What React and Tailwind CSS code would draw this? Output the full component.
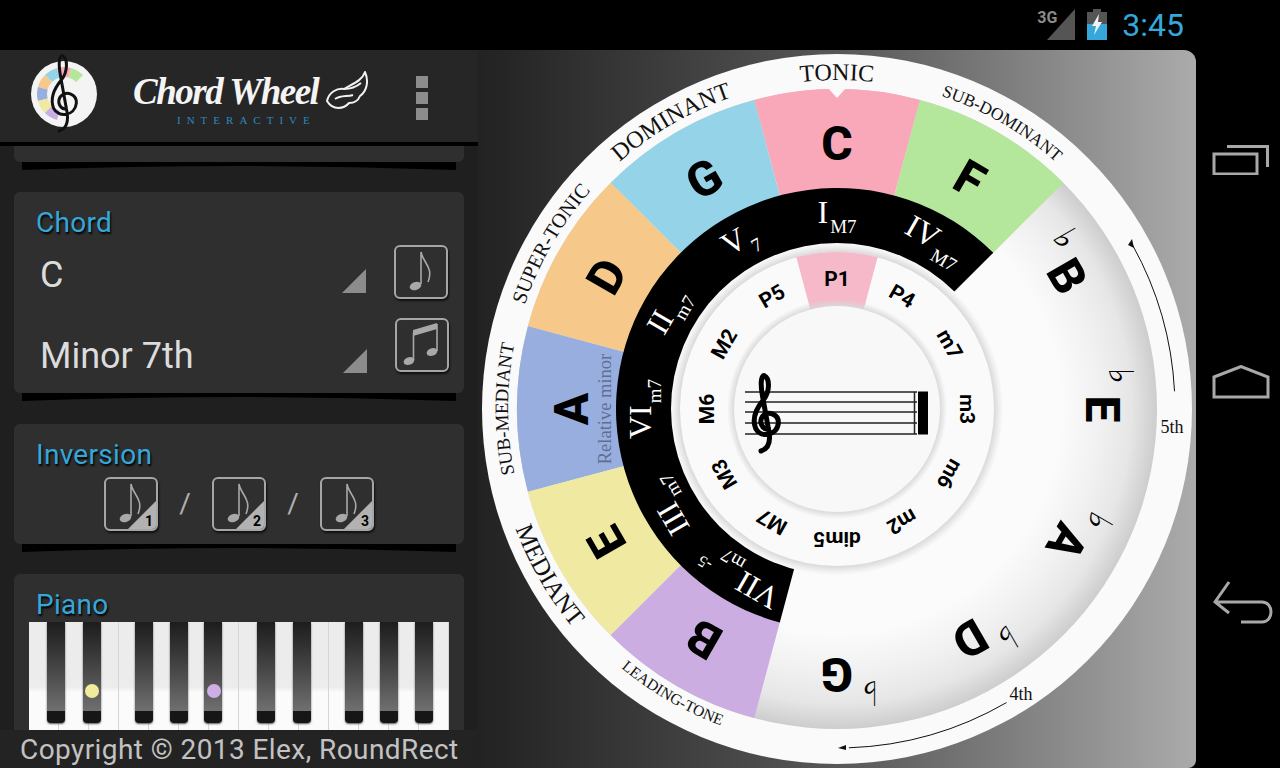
import React from 'react'

const polar = (r, a) => {
  const t = (a * Math.PI) / 180
  return [r * Math.sin(t), -r * Math.cos(t)]
}

// ring slice, angles are clockwise from the top
const slice = (r0, r1, a0, a1) => {
  const [x0, y0] = polar(r1, a0)
  const [x1, y1] = polar(r1, a1)
  const [x2, y2] = polar(r0, a1)
  const [x3, y3] = polar(r0, a0)
  const big = a1 - a0 > 180 ? 1 : 0
  return `M${x0} ${y0}A${r1} ${r1} 0 ${big} 1 ${x1} ${y1}L${x2} ${y2}A${r0} ${r0} 0 ${big} 0 ${x3} ${y3}Z`
}

const arc = (r, a0, a1) => {
  const [x0, y0] = polar(r, a0)
  const [x1, y1] = polar(r, a1)
  return `M${x0} ${y0}A${r} ${r} 0 0 ${a1 > a0 ? 1 : 0} ${x1} ${y1}`
}

const CLEF =
  'M78 258C105 250 108 225 100 190L82 90C75 50 80 30 88 32C105 40 105 80 85 105C60 135 52 165 62 190C75 218 125 215 130 175C132 148 100 135 82 155C72 170 80 190 95 192'

const WEDGES = [
  { note: 'F', angle: 30, color: '#b4e69b' },
  { note: 'C', angle: 0, color: '#f9a8ba' },
  { note: 'G', angle: -30, color: '#95d4e8' },
  { note: 'D', angle: -60, color: '#f6c98a' },
  { note: 'A', angle: -90, color: '#97aede' },
  { note: 'E', angle: -120, color: '#efe9a2' },
  { note: 'B', angle: -150, color: '#cbade2' },
]

const FLATS = [
  { note: 'B', angle: 60 },
  { note: 'E', angle: 90 },
  { note: 'A', angle: 120 },
  { note: 'D', angle: 150 },
  { note: 'G', angle: 180 },
]

const NUMERALS = [
  { n: 'I', sub: 'M7', angle: 0 },
  { n: 'IV', sub: 'M7', angle: 30 },
  { n: 'V', sub: '7', angle: -30 },
  { n: 'II', sub: 'm7', angle: -60 },
  { n: 'VI', sub: 'm7', angle: -90 },
  { n: 'III', sub: 'm7', angle: -120 },
  { n: 'VII', sub: 'm7', sup: '-5', angle: -150 },
]

const INTERVALS = ['P1', 'P4', 'm7', 'm3', 'm6', 'm2', 'dim5', 'M7', 'M3', 'M6', 'M2', 'P5']

const TOP_LABELS = [
  { text: 'TONIC', angle: 0, size: 24, r: 329 },
  { text: 'SUB-DOMINANT', angle: 30, size: 17.3, r: 330 },
  { text: 'DOMINANT', angle: -30, size: 24, r: 329 },
  { text: 'SUPER-TONIC', angle: -60, size: 20.5, r: 329 },
  { text: 'SUB-MEDIANT', angle: -90, size: 19, r: 329 },
]

const BOTTOM_LABELS = [
  { text: 'MEDIANT', angle: -120, size: 25, r: 343 },
  { text: 'LEADING-TONE', angle: -150, size: 15.6, r: 337 },
]

const BLACK_KEYS = [56, 92, 144, 179, 213, 266, 302, 354, 389, 424]

function Wheel() {
  return (
    <svg viewBox="-355 -355 710 710" className="w-[710px] h-[710px] block shrink-0">
      <defs>
        <radialGradient id="rim" cx="0" cy="0" r="320" gradientUnits="userSpaceOnUse">
          <stop offset="0.7" stopColor="#fbfbfb" />
          <stop offset="0.82" stopColor="#f1f1f1" />
          <stop offset="0.92" stopColor="#e6e6e6" />
          <stop offset="1" stopColor="#cdcdcd" />
        </radialGradient>
        <radialGradient id="well" cx="0" cy="0" r="166" gradientUnits="userSpaceOnUse">
          <stop offset="0.94" stopColor="#d6d6d6" />
          <stop offset="0.98" stopColor="#f0f0f0" />
          <stop offset="1" stopColor="#fafafa" />
        </radialGradient>
        <radialGradient id="hub" cx="0" cy="0" r="110" gradientUnits="userSpaceOnUse">
          <stop offset="0.93" stopColor="#d8d8d8" />
          <stop offset="1" stopColor="#d8d8d8" stopOpacity="0" />
        </radialGradient>
        {TOP_LABELS.map((l) => (
          <path key={l.text} id={`p-${l.text}`} d={arc(l.r, l.angle - 50, l.angle + 50)} />
        ))}
        {BOTTOM_LABELS.map((l) => (
          <path key={l.text} id={`p-${l.text}`} d={arc(l.r, l.angle + 50, l.angle - 50)} />
        ))}
      </defs>

      <circle r="355" fill="#fafafa" />
      <circle r="320" fill="url(#rim)" />

      {WEDGES.map((w) => (
        <path key={w.note} d={slice(219, 320, w.angle - 15, w.angle + 15)} fill={w.color} />
      ))}
      <path d="M-10 -322L0 -311L10 -322Z" fill="#fafafa" />

      <path d={slice(160, 221, -165, 45)} fill="#000" />

      {/* inner disc */}
      <circle r="166" fill="url(#well)" />
      <circle r="157" fill="#fafafa" />
      <path d={slice(103, 157, -15, 15)} fill="#f6b9c9" />
      <circle r="110" fill="url(#hub)" />
      <circle r="103" fill="#f8f8f8" />

      {/* note letters */}
      <g fontFamily="Roboto, sans-serif" fontWeight="800" fontSize="48" textAnchor="middle" fill="#000">
        {WEDGES.map((w) => (
          <text key={w.note} transform={`rotate(${w.angle}) translate(0 -266)`} y="17">
            {w.note}
          </text>
        ))}
        {FLATS.map((f) => (
          <text key={f.note} transform={`rotate(${f.angle}) translate(0 -266)`} y="17">
            {f.note}
          </text>
        ))}
      </g>
      <g fontFamily="'DejaVu Sans', sans-serif" fontSize="34" textAnchor="middle" fill="#000">
        {FLATS.map((f) => (
          <text key={f.note} transform={`rotate(${f.angle}) translate(-33 -283)`} y="11">
            ♭
          </text>
        ))}
      </g>

      {/* roman numerals */}
      <g fontFamily="'Liberation Serif', serif" fontSize="32" textAnchor="middle" fill="#fff">
        {NUMERALS.map((n) => (
          <text key={n.n} transform={`rotate(${n.angle}) translate(0 -192)`} y="6">
            <tspan>{n.n}</tspan>
            <tspan fontSize="19" dy="10" dx="2">{n.sub}</tspan>
            {n.sup && <tspan fontSize="16" dy="-18" dx="4">{n.sup}</tspan>}
          </text>
        ))}
      </g>

      {/* intervals */}
      <g fontFamily="Roboto, sans-serif" fontWeight="700" fontSize="21" textAnchor="middle" fill="#000">
        {INTERVALS.map((t, i) => (
          <text key={t} transform={`rotate(${i * 30}) translate(0 -131)`} y="8">
            {t}
          </text>
        ))}
      </g>

      {/* staff */}
      <g stroke="#222" strokeWidth="1.5">
        {[-17, -7, 3, 14, 25].map((y) => (
          <line key={y} x1="-92" x2="80" y1={y} y2={y} />
        ))}
        <line x1="77.5" x2="77.5" y1="-17" y2="25" />
      </g>
      <rect x="81" y="-17.5" width="10" height="43" fill="#000" />
      <g transform="translate(-102 -44) scale(0.3333)">
        <path d={CLEF} fill="none" stroke="#000" strokeWidth="15" strokeLinecap="round" />
      </g>

      {/* outer labels */}
      <g fontFamily="'Liberation Serif', serif" textAnchor="middle" fill="#111">
        {[...TOP_LABELS, ...BOTTOM_LABELS].map((l) => (
          <text key={l.text} fontSize={l.size}>
            <textPath href={`#p-${l.text}`} startOffset="50%">
              {l.text}
            </textPath>
          </text>
        ))}
        <text x="335" y="24" fontSize="18">5th</text>
        <text x="184" y="291" fontSize="18">4th</text>
      </g>
      <path d={arc(338, 87, 61)} fill="none" stroke="#111" strokeWidth="1" />
      <path d={arc(339, 150, 178)} fill="none" stroke="#111" strokeWidth="1" />
      <path d="M295 -170L297 -161L291 -164Z" fill="#111" />
      <path d="M1 339L9 336L9 341Z" fill="#111" />

      <text
        transform="rotate(-90) translate(0 -226)"
        fontFamily="'Liberation Serif', serif"
        fontSize="18.5"
        textAnchor="middle"
        fill="#5f6f92"
      >
        Relative minor
      </text>
    </svg>
  )
}

function Logo() {
  return (
    <svg viewBox="0 0 80 90" className="w-[80px] h-[90px] shrink-0">
      <circle cx="39" cy="43" r="33" fill="#f4f4f4" />
      <g transform="translate(39 43)">
        {WEDGES.map((w) => (
          <path key={w.note} d={slice(17, 27, w.angle - 15, w.angle + 15)} fill={w.color} />
        ))}
      </g>
      <g transform="translate(8 -6) scale(0.3333)">
        <path d={CLEF} fill="none" stroke="#111" strokeWidth="9" strokeLinecap="round" />
      </g>
    </svg>
  )
}

function Wing() {
  return (
    <svg viewBox="0 0 44 42" className="w-[44px] h-[42px] shrink-0" fill="none" stroke="#f2f2f2" strokeWidth="2" strokeLinejoin="round">
      <path d="M2 30C4 21 12 17 19 18C27 13 37 10 40 1C44 10 42 20 35 25C33 30 28 32 24 32C19 38 8 40 2 30Z" />
      <path d="M10 28C16 24 22 26 28 24M19 18C24 18 30 17 36 12" />
    </svg>
  )
}

function Lip() {
  return (
    <svg viewBox="0 0 434 8" preserveAspectRatio="none" className="block w-[434px] h-[8px] ml-[8px]">
      <path d="M0 0H434V8Q217 0 0 8Z" fill="#000" />
    </svg>
  )
}

function SingleNote() {
  return (
    <g fill="none" stroke="#a8a8a8" strokeWidth="1.6">
      <ellipse cx="21.5" cy="41" rx="6" ry="4" fill="#a8a8a8" stroke="none" transform="rotate(-20 21.5 41)" />
      <path d="M27 39V7C29 18 40 22 34 37" />
    </g>
  )
}

function IconBox({ children }) {
  return (
    <div className="w-[54px] h-[54px] border-2 border-[#a6a6a6] rounded-md shadow-[1px_2px_2px_#111] overflow-hidden shrink-0">
      <svg viewBox="2 2 50 50" className="block w-[50px] h-[50px]">
        {children}
      </svg>
    </div>
  )
}

function InversionButton({ n }) {
  return (
    <IconBox>
      <SingleNote />
      <path d="M52 24V52H24Z" fill="#b2b2b2" />
      <text x="45" y="49" fontFamily="Roboto, sans-serif" fontWeight="700" fontSize="14" textAnchor="middle" fill="#000">
        {n}
      </text>
    </IconBox>
  )
}

function Label({ children }) {
  return (
    <div className="font-['Roboto'] text-[28px] tracking-[0.3px] leading-[32px] text-[#35a7da] [text-shadow:1px_2px_2px_#000]">
      {children}
    </div>
  )
}

function Corner() {
  return <div className="w-[24px] h-[24px] bg-[#8c8c8c] [clip-path:polygon(100%_0,100%_100%,0_100%)] shrink-0" />
}

function Piano() {
  return (
    <div className="relative flex w-[420px] h-[108px] ml-[15px]">
      {Array.from({ length: 14 }).map((_, i) => (
        <div key={i} className="flex-1 border-r border-[#d6d6d6] bg-linear-to-b from-[#ececec] from-[60%] to-[#fbfbfb] to-[65%]" />
      ))}
      {BLACK_KEYS.map((c) => (
        <div
          key={c}
          className="absolute top-0 w-[18px] h-[101px] rounded-b-sm flex flex-col justify-end bg-linear-to-b from-[#1d1d1d] to-[#7c7c7c] shadow-[0_1px_2px_#555]"
          style={{ left: c - 29 - 9 }}
        >
          <div className="h-[12px] bg-[#161616] rounded-b-sm" />
        </div>
      ))}
      <div className="absolute left-[56px] top-[62px] w-[14px] h-[14px] rounded-full bg-[#f0ec9b]" />
      <div className="absolute left-[178px] top-[62px] w-[14px] h-[14px] rounded-full bg-[#cdaee6]" />
    </div>
  )
}

function Sidebar() {
  return (
    <div className="w-[478px] h-full shrink-0 flex flex-col bg-[#1f1f1f]">
      {/* Action bar */}
      <div className="h-[96px] shrink-0 flex items-center bg-[#262626] border-b-4 border-black pl-[25px]">
        <Logo />
        <div className="ml-[27px] w-[190px] flex flex-col items-start pl-[1px] mt-[4px]">
          <span className="font-['Liberation_Serif'] italic font-bold text-[37px] leading-[42px] text-[#f4f4f4] whitespace-nowrap tracking-[-1.5px]">
            Chord Wheel
          </span>
          <span className="font-['Liberation_Serif'] text-[11px] leading-[12px] text-[#2f86c0] tracking-[6px] whitespace-nowrap ml-[44px] mt-[1px]">
            INTERACTIVE
          </span>
        </div>
        <div className="-mt-[8px] ml-[3px]">
          <Wing />
        </div>
        <div className="ml-[47px] mt-[4px] flex flex-col gap-[4px]">
          <div className="w-[12px] h-[12px] bg-[#8c8c8c]" />
          <div className="w-[12px] h-[12px] bg-[#8c8c8c]" />
          <div className="w-[12px] h-[12px] bg-[#8c8c8c]" />
        </div>
      </div>

      {/* Cards */}
      <div className="flex-1 min-h-0 overflow-hidden px-[14px]">
        <div className="w-[450px] h-[16px] bg-[#2f2f2f] rounded-b-md" />
        <Lip />
        <div className="mt-[22px] w-[450px] h-[201px] bg-[#2f2f2f] rounded-md pt-[15px] pl-[22px] pr-[16px]">
          <Label>Chord</Label>
          <div className="flex items-center h-[54px] mt-[6px] pl-[4px]">
            <span className="font-['Roboto'] text-[36px] text-[#dcdcdc] flex-1 pt-[6px]">C</span>
            <div className="mt-[18px] mr-[28px]">
              <Corner />
            </div>
            <IconBox>
              <SingleNote />
            </IconBox>
          </div>
          <div className="flex items-center h-[54px] mt-[19px] pl-[4px]">
            <span className="font-['Roboto'] text-[36px] text-[#dcdcdc] flex-1 pt-[22px]">Minor 7th</span>
            <div className="mt-[32px] mr-[28px]">
              <Corner />
            </div>
            <div className="mr-[-1px]">
              <IconBox>
                <g fill="none" stroke="#a8a8a8" strokeWidth="1.6">
                  <ellipse cx="14" cy="43" rx="5.5" ry="3.8" fill="#a8a8a8" stroke="none" transform="rotate(-20 14 43)" />
                  <ellipse cx="37" cy="34" rx="5.5" ry="3.8" fill="#a8a8a8" stroke="none" transform="rotate(-20 37 34)" />
                  <path d="M18.5 42V15M42 33V6" />
                  <path d="M18 12L42 5V11L18 18Z" fill="#a8a8a8" stroke="none" />
                </g>
              </IconBox>
            </div>
          </div>
        </div>
        <Lip />
        <div className="mt-[23px] w-[450px] h-[120px] bg-[#2f2f2f] rounded-md pt-[15px] pl-[22px]">
          <Label>Inversion</Label>
          <div className="flex items-center mt-[6px] ml-[68px] font-['Roboto'] text-[28px] text-[#b0b0b0]">
            <InversionButton n="1" />
            <span className="w-[54px] text-center">/</span>
            <InversionButton n="2" />
            <span className="w-[54px] text-center">/</span>
            <InversionButton n="3" />
          </div>
        </div>
        <Lip />
        <div className="mt-[22px] w-[450px] h-[200px] bg-[#2f2f2f] rounded-md pt-[15px]">
          <div className="pl-[22px] h-[33px]">
            <Label>Piano</Label>
          </div>
          <Piano />
        </div>
      </div>

      <div className="h-[38px] shrink-0 bg-[#232323] pl-[20px] font-['Roboto'] text-[28px] tracking-[0.42px] leading-[40px] text-[#c2c2c2] whitespace-nowrap">
        Copyright © 2013 Elex, RoundRect
      </div>
    </div>
  )
}

function NavBar() {
  return (
    <div className="w-[84px] h-full shrink-0 flex flex-col items-center bg-black pt-[95px]">
      <svg viewBox="0 0 58 30" className="w-[58px] h-[30px] ml-[6px]" fill="none" stroke="#a8a8a8" strokeWidth="3">
        <rect x="2" y="9" width="43" height="20" />
        <path d="M15 1.5H55.5V22" />
      </svg>
      <svg viewBox="0 0 58 34" className="w-[58px] h-[34px] mt-[190px] ml-[6px]" fill="none" stroke="#a8a8a8" strokeWidth="3">
        <path d="M2 12L29 1.5L56 12V32H2Z" />
      </svg>
      <svg viewBox="0 0 60 46" className="w-[60px] h-[46px] mt-[179px] ml-[10px]" fill="none" stroke="#a8a8a8" strokeWidth="3">
        <path d="M16 4L2 24L16 35M2 24H49C61 24 61 44 49 44H28" />
      </svg>
    </div>
  )
}

function StatusBar() {
  return (
    <div className="h-[50px] shrink-0 bg-black relative flex items-center justify-end pr-[96px]">
      <div className="relative w-[38px] h-[32px] mr-[12px] mt-[-1px]">
        <svg viewBox="0 0 28 31" className="absolute right-0 top-0 w-[28px] h-[31px]">
          <path d="M28 0V31H0Z" fill="#555" />
        </svg>
        <span className="absolute left-0 top-0 font-['Roboto'] font-bold text-[16px] leading-[17px] text-[#8a8a8a]">3G</span>
      </div>
      <svg viewBox="0 0 20 31" className="w-[20px] h-[31px] mr-[15px] mt-[-1px]">
        <rect x="6" y="0" width="8" height="3" fill="#555" />
        <rect x="0" y="3" width="20" height="12" fill="#555" />
        <rect x="0" y="15" width="20" height="16" fill="#35a7da" />
        <path d="M12 5L5 17H9L7 26L15 13H11Z" fill="#f2f2f2" />
      </svg>
      <span className="font-['Roboto'] text-[32px] text-[#35a7da] leading-none">3:45</span>
    </div>
  )
}

export default function App() {
  return (
    <div className="w-[1280px] h-[768px] overflow-hidden bg-black flex flex-col">
      <StatusBar />
      <div className="flex-1 min-h-0 flex">
        <Sidebar />
        <div className="w-[718px] h-full rounded-tr-xl rounded-br-lg overflow-hidden bg-linear-to-r from-[#222222] via-[#575757] to-[#ababab] pt-[4px] pl-[4px]">
          <Wheel />
        </div>
        <NavBar />
      </div>
    </div>
  )
}
